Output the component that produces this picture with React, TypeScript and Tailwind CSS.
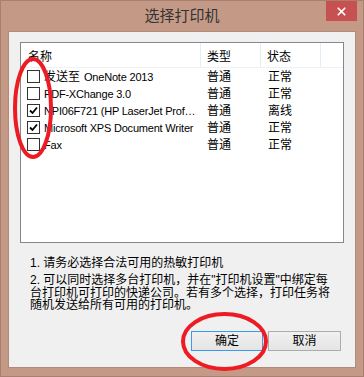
import { X } from "lucide-react";

type Printer = { prefix?: string; name: string; type: string; status: string; checked: boolean };

const printers: Printer[] = [
  { prefix: "发送至", name: "OneNote 2013", type: "普通", status: "正常", checked: false },
  { name: "PDF-XChange 3.0", type: "普通", status: "正常", checked: false },
  { name: "NPI06F721 (HP LaserJet Prof…", type: "普通", status: "离线", checked: true },
  { name: "Microsoft XPS Document Writer", type: "普通", status: "正常", checked: true },
  { name: "Fax", type: "普通", status: "正常", checked: false },
];

const font = "font-['Liberation_Sans','Noto_Sans_CJK_SC',sans-serif]";

function Check({ checked }: { checked: boolean }) {
  return (
    <span className="flex size-[13px] shrink-0 items-center justify-center border border-[#333] bg-white">
      {checked && (
        <svg width="9" height="9" viewBox="0 0 9 9" aria-hidden>
          <path d="M1 4.5 L3.5 7 L8 1.5" fill="none" stroke="#000" strokeWidth="1.8" />
        </svg>
      )}
    </span>
  );
}

export default function App() {
  return (
    <div
      className={`relative flex h-[377px] w-[364px] flex-col border border-[#a9806f] bg-[#c49a87] text-[12px] leading-none text-black ${font}`}
    >
      {/* title bar */}
      <div className="grid h-[30px] grid-cols-[1fr_auto_1fr] items-start">
        <span />
        <span className="pt-[7px] text-[15px] text-[#333]">选择打印机</span>
        <div className="flex justify-end pr-[6px]">
          <button className="flex h-[20px] w-[31px] items-center justify-center bg-[#c75050] text-white">
            <X className="size-[13px]" strokeWidth={3.2} />
          </button>
        </div>
      </div>

      {/* client area */}
      <div className="mx-[7px] mb-[8px] flex flex-1 flex-col border border-[#b08b7b] bg-[#f0f0f0] px-[11px] pt-[10px]">
        <div className="h-[201px] border border-[#828790] bg-white">
          <div className="grid h-[25px] grid-cols-[180px_60px_60px_1fr] border-b border-[#eef2f7]">
            <span className="flex items-center border-r border-[#e3ecf7] pl-[7px] pt-[4px]">名称</span>
            <span className="flex items-center border-r border-[#e3ecf7] pl-[6px] pt-[4px]">类型</span>
            <span className="flex items-center border-r border-[#e3ecf7] pl-[6px] pt-[4px]">状态</span>
            <span />
          </div>
          {printers.map((p) => (
            <div key={p.name} className="grid h-[17px] grid-cols-[180px_60px_60px_1fr] items-center">
              <div className="flex min-w-0 items-center gap-[4px] pl-[6px] pr-[4px]">
                <Check checked={p.checked} />
                <span className="whitespace-nowrap text-[11px] leading-[14px] tracking-[-0.2px]">
                  {p.prefix && <span className="mr-[4px] text-[12px] tracking-normal">{p.prefix}</span>}
                  {p.name}
                </span>
              </div>
              <span className="pl-[6px]">{p.type}</span>
              <span className="pl-[7px]">{p.status}</span>
              <span />
            </div>
          ))}
        </div>

        <div className="mt-[14px] pl-[10px] text-[12px]">
          <p className="leading-[13px]">1. 请务必选择合法可用的热敏打印机</p>
          <p className="mt-[4px] leading-[12.5px]">
            2. 可以同时选择多台打印机，并在"打印机设置"中绑定每
            <br />
            台打印机可打印的快递公司。若有多个选择，打印任务将
            <br />
            随机发送给所有可用的打印机。
          </p>
        </div>

        <div className="mt-auto mb-[16px] flex justify-end gap-[5px] pr-[3px]">
          <button className="h-[20px] w-[72px] border border-[#3c9ae8] bg-gradient-to-b from-[#f0f0f0] to-[#e5e5e5]">
            确定
          </button>
          <button className="h-[20px] w-[73px] border border-[#acacac] bg-gradient-to-b from-[#f0f0f0] to-[#e5e5e5]">
            取消
          </button>
        </div>
      </div>

      {/* red marker annotations drawn over the dialog */}
      <svg className="pointer-events-none absolute left-[-1px] top-[-1px]" width="364" height="377" aria-hidden>
        <ellipse cx="33" cy="108" rx="18" ry="49" fill="none" stroke="#ed1c24" strokeWidth="4" />
        <ellipse cx="224.5" cy="341.5" rx="41.5" ry="27.5" fill="none" stroke="#ed1c24" strokeWidth="4" />
      </svg>
    </div>
  );
}
